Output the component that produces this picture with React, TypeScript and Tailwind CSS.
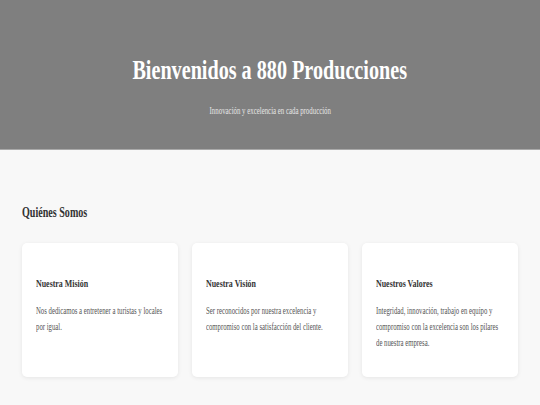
import React from 'react';

const cards = [
  {
    title: 'Nuestra Misión',
    text: 'Nos dedicamos a entretener a turistas y locales por igual.',
  },
  {
    title: 'Nuestra Visión',
    text: 'Ser reconocidos por nuestra excelencia y compromiso con la satisfacción del cliente.',
  },
  {
    title: 'Nuestros Valores',
    text: 'Integridad, innovación, trabajo en equipo y compromiso con la excelencia son los pilares de nuestra empresa.',
  },
];

export default function App() {
  return (
    <div className="min-h-[405px] w-[540px] overflow-hidden bg-[#f8f8f8] font-['Liberation_Serif',serif]">
      <header className="h-[150px] bg-[#7f7f7f] border-b border-[#a9a9a9] pt-[53px] text-center">
        <h1 className="text-[28px] leading-[34px] font-bold text-white">
          <span className="inline-block whitespace-nowrap scale-x-[0.72]">
            Bienvenidos a 880 Producciones
          </span>
        </h1>
        <p className="mt-[18px] text-[9.5px] leading-[12px] text-[#e6e6e6]">
          <span className="inline-block whitespace-nowrap scale-x-[0.72]">
            Innovación y excelencia en cada producción
          </span>
        </p>
      </header>

      <section className="px-[22px] pt-[54px]">
        <h2 className="text-[14px] leading-[18px] font-bold text-[#333333]">
          <span className="inline-block whitespace-nowrap origin-left scale-x-[0.72]">
            Quiénes Somos
          </span>
        </h2>

        <div className="mt-[21px] grid grid-cols-3 gap-[14px]">
          {cards.map((c) => (
            <div
              key={c.title}
              className="overflow-hidden rounded-[5px] bg-white px-[13.5px] pt-[33px] pb-[26px] shadow-[0_1px_4px_rgba(0,0,0,0.08)]"
            >
              <h3 className="text-[11px] leading-[14px] font-bold text-[#333333]">
                <span className="inline-block whitespace-nowrap origin-left scale-x-[0.72]">
                  {c.title}
                </span>
              </h3>
              <p className="mt-[14px] w-[178px] origin-left scale-x-[0.72] text-[9.4px] leading-[15.8px] text-[#555555]">
                {c.text}
              </p>
            </div>
          ))}
        </div>
      </section>
    </div>
  );
}
